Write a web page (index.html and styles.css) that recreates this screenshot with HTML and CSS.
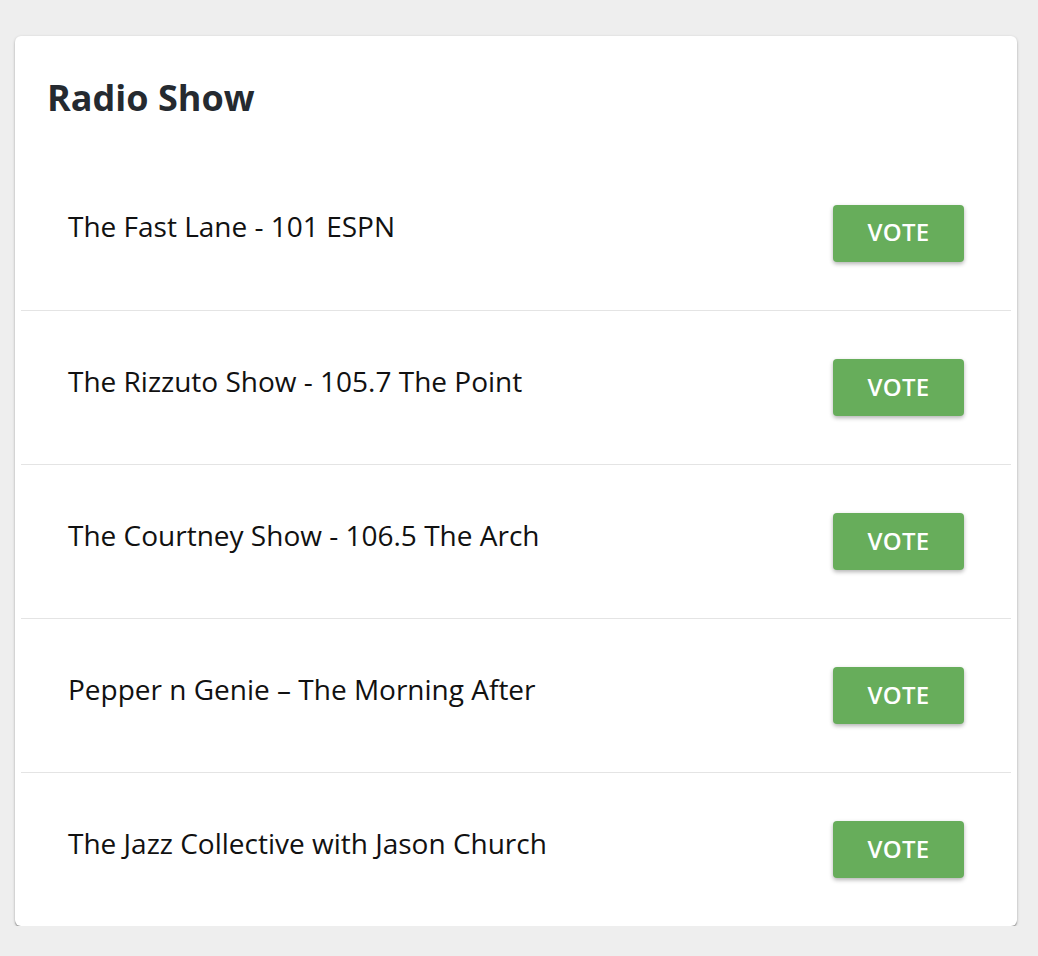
FILE: index.html
```html
<!DOCTYPE html>
<html>
<head>
<meta charset="utf-8">
<link rel="stylesheet" href="styles.css">
</head>
<body>
<div class="card">
  <h2 class="title">Radio Show</h2>
  <ul class="list">
    <li class="row"><span class="name">The Fast Lane - 101 ESPN</span><button class="vote">VOTE</button></li>
    <li class="row"><span class="name">The Rizzuto Show - 105.7 The Point</span><button class="vote">VOTE</button></li>
    <li class="row"><span class="name">The Courtney Show - 106.5 The Arch</span><button class="vote">VOTE</button></li>
    <li class="row"><span class="name">Pepper n Genie – The Morning After</span><button class="vote">VOTE</button></li>
    <li class="row"><span class="name">The Jazz Collective with Jason Church</span><button class="vote">VOTE</button></li>
  </ul>
</div>
</body>
</html>
```

FILE: styles.css
```css
html, body {
  margin: 0;
  padding: 0;
  background: #eeeeee;
  font-family: "Open Sans", "Liberation Sans", sans-serif;
}
body {
  padding: 36px 21px 0 15px;
}
.card {
  background: #ffffff;
  border-radius: 6px;
  box-shadow: 0 1px 3px rgba(0, 0, 0, 0.25), 0 2px 1px rgba(0, 0, 0, 0.2);
  overflow: hidden;
}
.title {
  margin: 0;
  height: 120px;
  box-sizing: border-box;
  padding: 38px 32px 0;
  font-size: 36px;
  line-height: 48px;
  font-weight: 700;
  color: #252a30;
}
.list {
  list-style: none;
  margin: 0 6px;
  padding: 0;
}
.row {
  display: flex;
  align-items: center;
  justify-content: space-between;
  height: 154px;
  box-sizing: border-box;
  padding: 0 47px;
  border-top: 1px solid #e4e4e4;
}
.row:first-child {
  border-top: none;
}
.name {
  font-size: 28px;
  line-height: 38px;
  color: #111111;
  padding-bottom: 14px;
}
.vote {
  width: 131px;
  height: 57px;
  border: none;
  border-radius: 4px;
  background: #67ad5b;
  color: #ffffff;
  font-family: "Open Sans", "Liberation Sans", sans-serif;
  font-size: 24px;
  font-weight: 600;
  letter-spacing: 0.3px;
  box-shadow: 0 2px 4px rgba(0, 0, 0, 0.3);
  padding: 0 0 3px;
}
```
